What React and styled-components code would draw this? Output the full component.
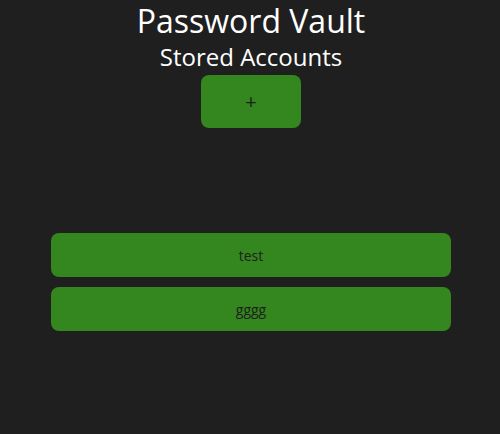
import React from "react";
import styled, { createGlobalStyle } from "styled-components";

const GlobalStyle = createGlobalStyle`
  body {
    margin: 0;
    background: #1f1f1f;
    font-family: "Open Sans", "Liberation Sans", sans-serif;
  }
`;

const Page = styled.div`
  display: flex;
  flex-direction: column;
  align-items: center;
  padding: 1px 0 0 2px;
  color: #ffffff;
`;

const Title = styled.h1`
  margin: 0;
  padding-top: 2px;
  font-size: 32px;
  font-weight: 400;
  line-height: 36px;
`;

const Subtitle = styled.h2`
  margin: 0;
  font-size: 24px;
  font-weight: 400;
  line-height: 36px;
`;

const AddButton = styled.button`
  width: 100px;
  height: 53px;
  border: none;
  border-radius: 8px;
  background: #34861e;
  color: #1f1f1f;
  font-family: inherit;
  font-size: 20px;
  cursor: pointer;
`;

const AccountList = styled.div`
  width: 400px;
  margin-top: 105px;
  display: flex;
  flex-direction: column;
  gap: 10px;
`;

const AccountRow = styled.div`
  height: 44px;
  border-radius: 8px;
  background: #34861e;
  color: #1f1f1f;
  font-size: 14px;
  display: flex;
  align-items: center;
  justify-content: center;
`;

const accounts = ["test", "gggg"];

export default function App() {
  return (
    <>
      <GlobalStyle />
      <Page>
        <Title>Password Vault</Title>
        <Subtitle>Stored Accounts</Subtitle>
        <AddButton>+</AddButton>
        <AccountList>
          {accounts.map((name) => (
            <AccountRow key={name}>{name}</AccountRow>
          ))}
        </AccountList>
      </Page>
    </>
  );
}
